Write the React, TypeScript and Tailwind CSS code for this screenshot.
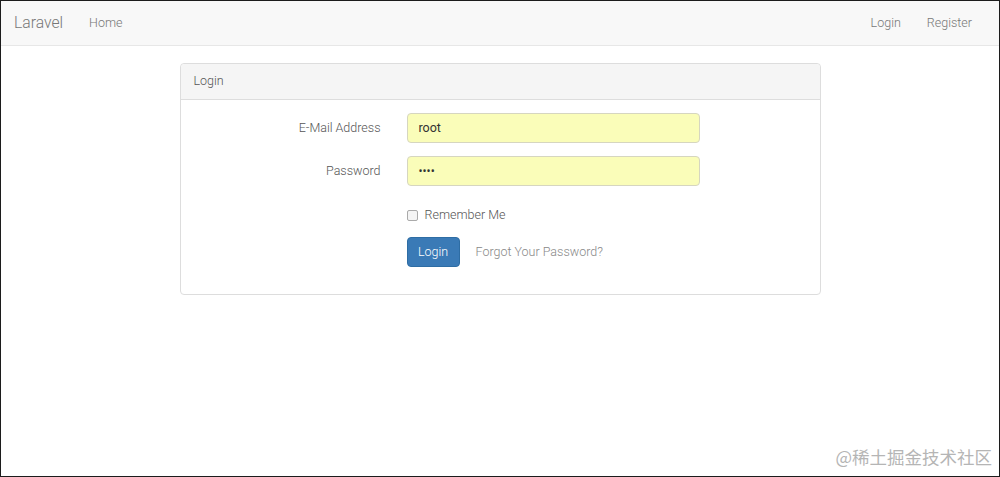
import React from 'react';

export default function App() {
  return (
    <div className="w-[1000px] h-[477px] border border-[#1c1c1c] bg-white overflow-hidden relative text-[12.5px] text-[#636b6f]" style={{ fontFamily: 'Roboto, "Liberation Sans", sans-serif' }}>
      {/* Navbar */}
      <nav className="h-[45px] bg-[#f8f8f8] border-b border-[#e7e7e7] flex items-center justify-between">
        <div className="flex items-center">
          <span className="pl-[13px] text-[15.7px] font-light text-[#777]">Laravel</span>
          <span className="ml-[26px] text-[#777] font-light">Home</span>
        </div>
        <div className="flex items-center gap-[26px] pr-[27px] text-[#777] font-light">
          <span>Login</span>
          <span>Register</span>
        </div>
      </nav>

      {/* Panel */}
      <div className="mx-auto mt-[17px] w-[641px] border border-[#dddddd] rounded-[4px]">
        <div className="h-[36px] bg-[#f5f5f5] border-b border-[#dddddd] rounded-t-[4px] px-[13px] flex items-center text-[#555] font-light">
          Login
        </div>
        <div className="pt-[13px] pb-[27px]">
          <div className="flex items-center h-[30px]">
            <label className="w-[200px] text-right font-light text-[#555]">E-Mail Address</label>
            <div className="ml-[26px] w-[293px] h-[30px] bg-[#fafdb9] border border-[#d6d6c0] rounded-[4px] px-[11px] flex items-center text-[#333]">root</div>
          </div>
          <div className="flex items-center h-[30px] mt-[13px]">
            <label className="w-[200px] text-right font-light text-[#555]">Password</label>
            <div className="ml-[26px] w-[293px] h-[30px] bg-[#fafdb9] border border-[#d6d6c0] rounded-[4px] px-[11px] flex items-center text-[#333] text-[12px]">••••</div>
          </div>
          <div className="flex items-center mt-[20px] h-[18px]">
            <div className="ml-[226px] w-[11px] h-[11px] border border-[#aaa] rounded-[2px] bg-[#f4f4f4]" />
            <span className="ml-[7px] text-[#555] font-light">Remember Me</span>
          </div>
          <div className="flex items-center mt-[13px]">
            <div className="ml-[226px] w-[53px] h-[30px] bg-[#3a7ab6] border border-[#2e6da4] rounded-[4px] flex items-center justify-center text-white font-light">Login</div>
            <span className="ml-[16px] text-[#888] font-light">Forgot Your Password?</span>
          </div>
        </div>
      </div>

      {/* Watermark */}
      <div className="absolute right-[7px] bottom-[6px] text-[17.5px] text-[#b5b5b5]" style={{ fontFamily: '"Noto Sans CJK SC", sans-serif' }}>@稀土掘金技术社区</div>
    </div>
  );
}
